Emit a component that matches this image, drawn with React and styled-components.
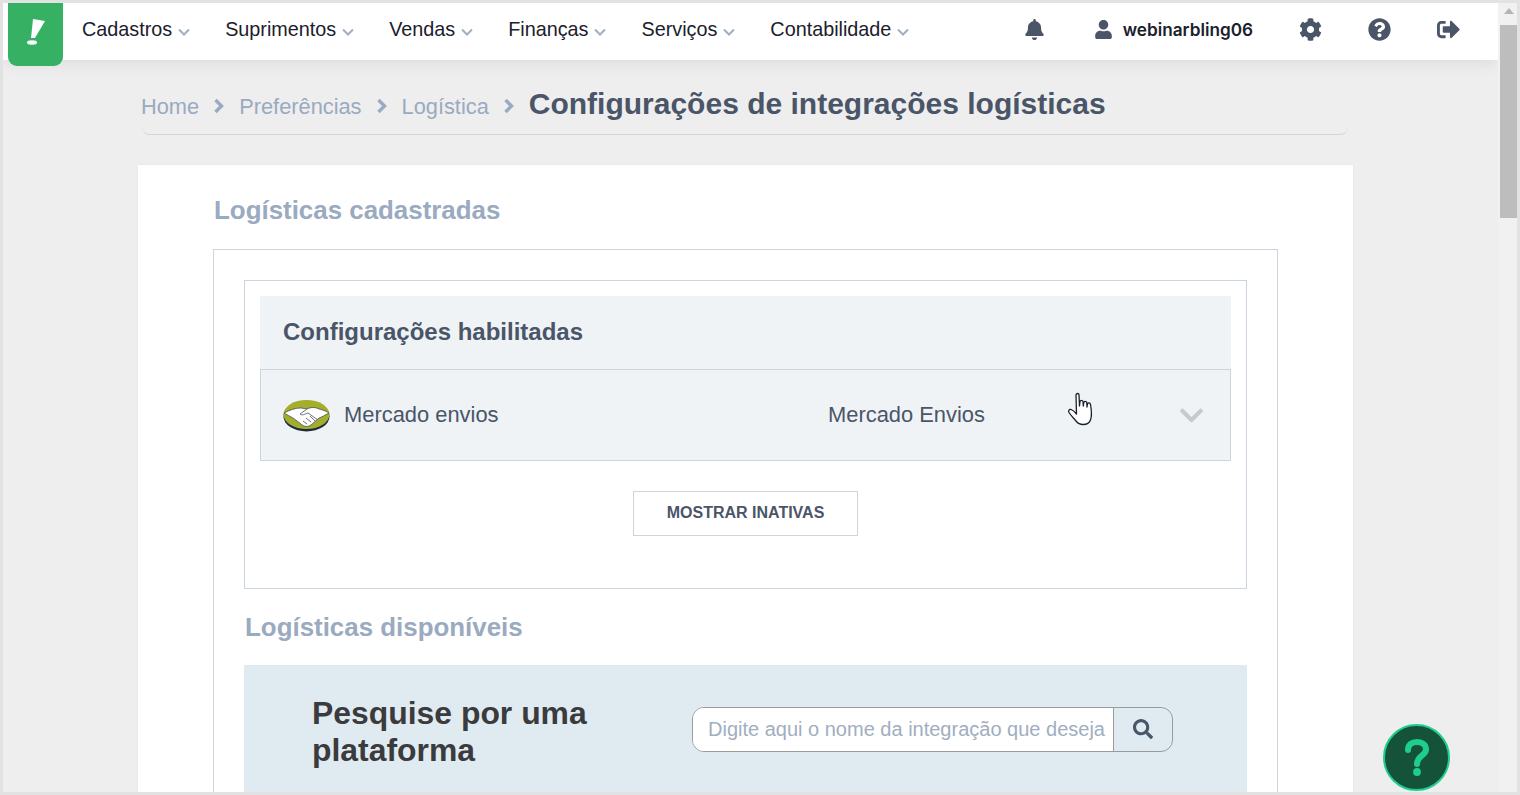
import React from "react";
import styled, { createGlobalStyle } from "styled-components";
import {
  FaBell,
  FaUser,
  FaCog,
  FaQuestionCircle,
  FaSignOutAlt,
  FaSearch,
  FaChevronDown,
} from "react-icons/fa";

const GlobalStyle = createGlobalStyle`
  html, body { margin: 0; padding: 0; height: 100%; overflow: hidden; }
  * { box-sizing: border-box; }
  body { font-family: "Liberation Sans", Arial, sans-serif; }
`;

const Frame = styled.div`
  position: relative;
  width: 1520px;
  height: 795px;
  padding: 3px 3px 3px;
  background: #e2e2e2;
  display: flex;
  overflow: hidden;
`;

const Page = styled.div`
  width: 1495px;
  flex-shrink: 0;
  background: #eeeeee;
  overflow: hidden;
`;

const Scrollbar = styled.div`
  flex: 1;
  background: #f1f1f1;
  padding: 5px 0 0 2px;
  display: flex;
  flex-direction: column;
  align-items: center;
`;

const ScrollArrow = styled.div`
  width: 0;
  height: 0;
  margin-bottom: 11px;
  border-left: 5px solid transparent;
  border-right: 5px solid transparent;
  border-bottom: 6px solid #b4b4b4;
`;

const ScrollThumb = styled.div`
  width: 100%;
  height: 193px;
  background: #bdbdbd;
`;

const Header = styled.header`
  height: 57px;
  background: #fff;
  display: flex;
  align-items: center;
  padding: 0 38px 4px 5px;
  box-shadow: 0 4px 14px rgba(0, 0, 0, 0.07);
  position: relative;
`;

const LogoTile = styled.div`
  width: 55px;
  height: 63px;
  flex-shrink: 0;
  align-self: flex-start;
  margin-right: 19px;
  background: #36b163;
  border-radius: 0 0 9px 9px;
  display: flex;
  align-items: center;
  justify-content: center;
  padding-bottom: 5px;
`;

const Nav = styled.nav`
  display: flex;
  gap: 35px;
`;

const NavItem = styled.div`
  display: flex;
  align-items: center;
  gap: 6px;
  font-size: 19.8px;
  color: #1a202c;
`;

const NavChevron = styled.svg`
  margin-top: 4px;
  fill: none;
  stroke: #a0aec0;
  stroke-width: 2;
`;

const HeaderRight = styled.div`
  margin-left: auto;
  display: flex;
  align-items: center;
  color: #4a5568;
`;

const HeaderIcon = styled.span`
  display: flex;
  margin-left: ${(p) => p.$gap}px;
  font-size: 23px;
`;

const UserName = styled.span`
  margin-left: 10px;
  font-family: "Inter", sans-serif;
  font-weight: 600;
  font-size: 17.2px;
  color: #1a202c;
`;

const Breadcrumb = styled.div`
  margin: 0 150px 0 139px;
  height: 75px;
  padding: 14px 0 0;
  border-bottom: 1px solid #cbd5e0;
  border-radius: 0 0 8px 8px;
  display: flex;
  align-items: center;
  gap: 14px;
  font-size: 21.8px;
  color: #9aaac0;
`;

const CrumbLink = styled.span`
  margin-top: 5px;
  margin-left: ${(p) => (p.$first ? "-1px" : "0")};
`;

const CrumbArrow = styled.svg`
  margin-top: 3px;
  fill: none;
  stroke: #9aaac0;
  stroke-width: 3.4;
`;

const CrumbTitle = styled.h1`
  margin: 0;
  font-size: 30px;
  font-weight: 700;
  color: #4a5568;
`;

const Card = styled.main`
  margin: 30px 0 0 135px;
  width: 1215px;
  height: 700px;
  background: #fff;
  padding: 30px 75px;
  box-shadow: 0 0 1px #cbd5e0;
`;

const SectionTitle = styled.h2`
  margin: 0 0 0 1px;
  font-size: 25.9px;
  line-height: 30px;
  font-weight: 700;
  color: #9aaac0;
`;

const Outer = styled.section`
  margin-top: 24px;
  height: 600px;
  border: 1px solid #cbd5e0;
  padding: 30px;
`;

const Inner = styled.div`
  height: 309px;
  border: 1px solid #cbd5e0;
  padding: 15px;
`;

const ConfigHead = styled.div`
  height: 73px;
  display: flex;
  align-items: center;
  padding: 0 0 2px 23px;
  background: #eff3f6;
  font-size: 24px;
  font-weight: 700;
  color: #4a5568;
`;

const ConfigRow = styled.div`
  height: 92px;
  display: flex;
  align-items: center;
  padding: 0 25px 0 22px;
  background: #eff3f6;
  border: 1px solid #cbd5e0;
  font-size: 21.9px;
  color: #4a5568;
`;

const RowName = styled.span`
  margin-left: 14px;
  width: 484px;
`;

const RowChevron = styled.span`
  margin-left: auto;
  display: flex;
  color: #c9c9c9;
  font-size: 27px;
`;

const ButtonRow = styled.div`
  display: flex;
  justify-content: center;
  padding: 30px 0 0 0;
`;

const GhostButton = styled.button`
  width: 225px;
  height: 45px;
  padding: 0 0 2px;
  background: #fff;
  border: 1px solid #cbd5e0;
  font-family: inherit;
  font-size: 16px;
  font-weight: 700;
  color: #4a5568;
`;

const SubTitle = styled(SectionTitle)`
  margin: 23px 0 23px 1px;
`;

const SearchPanel = styled.div`
  height: 200px;
  background: #dfebf1;
  padding: 30px 0 0 68px;
  display: flex;
  align-items: flex-start;
`;

const SearchTitle = styled.h3`
  margin: 0;
  width: 380px;
  font-size: 31.9px;
  line-height: 37px;
  font-weight: 700;
  color: #3b3b3d;
`;

const SearchBox = styled.div`
  margin-top: 12px;
  width: 481px;
  height: 45px;
  display: flex;
  border: 1px solid #9b9b9b;
  border-radius: 12px;
  overflow: hidden;
`;

const SearchInput = styled.input`
  width: 420px;
  border: 0;
  padding: 0 0 0 15px;
  background: #fff;
  font-family: inherit;
  font-size: 20px;
  outline: none;
  &::placeholder { color: #a0aec0; opacity: 1; }
`;

const SearchButton = styled.button`
  flex: 1;
  border: 0;
  border-left: 1px solid #9b9b9b;
  background: transparent;
  display: flex;
  align-items: center;
  justify-content: center;
  color: #4a5568;
  font-size: 20px;
  padding: 0 0 2px 0;
`;

const HelpBubble = styled.div`
  position: absolute;
  left: 1383px;
  top: 724px;
  width: 67px;
  height: 67px;
  border-radius: 50%;
  background: #15523a;
  border: 2px solid #1fce8f;
  display: flex;
  align-items: center;
  justify-content: center;
`;

const HandCursor = styled.svg`
  position: absolute;
  left: 1067px;
  top: 392px;
`;

const menu = ["Cadastros", "Suprimentos", "Vendas", "Finanças", "Serviços", "Contabilidade"];

const DownMark = () => (
  <NavChevron width="12" height="8" viewBox="0 0 12 8">
    <path d="M1 1.5 L6 6.5 L11 1.5" />
  </NavChevron>
);

const RightMark = () => (
  <CrumbArrow width="12" height="16" viewBox="0 0 12 16">
    <path d="M2.5 2 L8.5 8 L2.5 14" />
  </CrumbArrow>
);

const MercadoLogo = () => (
  <svg width="47" height="33" viewBox="0 0 47 33">
    <ellipse cx="23.5" cy="17.5" rx="23" ry="15" fill="#1c2b40" />
    <ellipse cx="23.5" cy="15.5" rx="23" ry="14.5" fill="#a4ad2c" />
    <path
      d="M1 14 C7 11 12 9 18 9 L24 10 C28 8 32 8 36 10 C40 11 43 12 46 14 C42 16 39 18 36 19 L28 26 C25 28 21 28 18 25 L10 19 C7 17 4 16 1 14 Z"
      fill="#fff"
      stroke="#1c2b40"
      strokeWidth="0.6"
    />
    <path
      d="M24 10 L17 15 C19 17 22 15 25 14 L35 21 M20 22 L24 25 M23 19 L28 23 M27 17 L32 22"
      fill="none"
      stroke="#5b6470"
      strokeWidth="0.9"
    />
  </svg>
);

const LogoMark = () => (
  <svg width="18" height="26" viewBox="0 0 18 26">
    <path d="M6 0 L18 2 L8 19 L4 19 Z" fill="#fff" />
    <ellipse cx="5" cy="23.5" rx="5" ry="2.2" fill="#fff" />
  </svg>
);

const HelpMark = () => (
  <svg width="24" height="37" viewBox="0 0 24 37" fill="none">
    <path
      d="M3 11 C3 5.5 7 3 12 3 C17.5 3 21 6 21 10.5 C21 16.5 12 16.5 12 25"
      stroke="#1fce8f"
      strokeWidth="6"
      strokeLinecap="round"
    />
    <circle cx="12" cy="33" r="3.9" fill="#1fce8f" />
  </svg>
);

export default function App() {
  return (
    <Frame>
      <GlobalStyle />
      <Page>
        <Header>
          <LogoTile>
            <LogoMark />
          </LogoTile>
          <Nav>
            {menu.map((item) => (
              <NavItem key={item}>
                {item}
                <DownMark />
              </NavItem>
            ))}
          </Nav>
          <HeaderRight>
            <HeaderIcon $gap={0}>
              <FaBell size={21} />
            </HeaderIcon>
            <HeaderIcon $gap={49}>
              <FaUser size={19} />
            </HeaderIcon>
            <UserName>webinarbling06</UserName>
            <HeaderIcon $gap={46}>
              <FaCog />
            </HeaderIcon>
            <HeaderIcon $gap={46}>
              <FaQuestionCircle />
            </HeaderIcon>
            <HeaderIcon $gap={46}>
              <FaSignOutAlt />
            </HeaderIcon>
          </HeaderRight>
        </Header>
        <Breadcrumb>
          <CrumbLink $first>Home</CrumbLink>
          <RightMark />
          <CrumbLink>Preferências</CrumbLink>
          <RightMark />
          <CrumbLink>Logística</CrumbLink>
          <RightMark />
          <CrumbTitle>Configurações de integrações logísticas</CrumbTitle>
        </Breadcrumb>
        <Card>
          <SectionTitle>Logísticas cadastradas</SectionTitle>
          <Outer>
            <Inner>
              <ConfigHead>Configurações habilitadas</ConfigHead>
              <ConfigRow>
                <MercadoLogo />
                <RowName>Mercado envios</RowName>
                <span>Mercado Envios</span>
                <RowChevron>
                  <FaChevronDown />
                </RowChevron>
              </ConfigRow>
              <ButtonRow>
                <GhostButton>MOSTRAR INATIVAS</GhostButton>
              </ButtonRow>
            </Inner>
            <SubTitle>Logísticas disponíveis</SubTitle>
            <SearchPanel>
              <SearchTitle>Pesquise por uma plataforma</SearchTitle>
              <SearchBox>
                <SearchInput placeholder="Digite aqui o nome da integração que deseja" />
                <SearchButton>
                  <FaSearch />
                </SearchButton>
              </SearchBox>
            </SearchPanel>
          </Outer>
        </Card>
      </Page>
      <Scrollbar>
        <ScrollArrow />
        <ScrollThumb />
      </Scrollbar>
      <HandCursor width="28" height="34" viewBox="0 0 28 34">
        <path
          d="M9 3 C9 1 12 1 12 3 L12.5 14 L13 9.5 C13.5 8 15.5 8 16 9.5 L16.3 14 L16.8 10.5 C17.3 9 19.3 9 19.8 10.5 L20 15 L20.5 12 C21 10.5 23 10.5 23.5 12.5 C24.5 18 25 24 23.5 28 C22.5 31 20 32.5 16 32.5 C13 32.5 11 31.5 9 29 C6.5 26 4 23.5 2 20.5 C1 19 2 17 4 17.5 C6 18.2 8 20 9.5 22 Z"
          fill="#fff"
          stroke="#1a202c"
          strokeWidth="1.3"
          strokeLinejoin="round"
        />
      </HandCursor>
      <HelpBubble>
        <HelpMark />
      </HelpBubble>
    </Frame>
  );
}
